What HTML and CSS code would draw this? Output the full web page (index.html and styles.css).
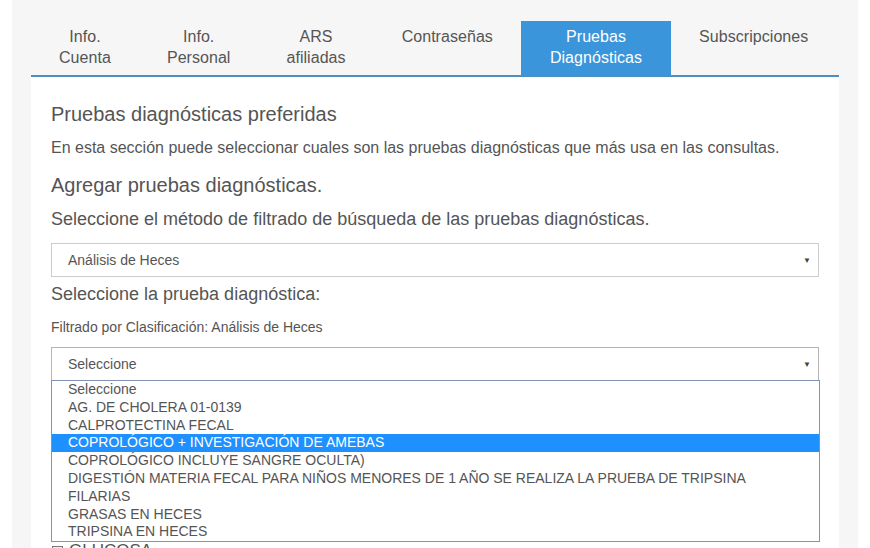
FILE: index.html
```html
<!DOCTYPE html>
<html lang="es">

<head>
    <meta charset="UTF-8">
    <meta name="viewport" content="width=device-width, initial-scale=1.0">
    <title>Pruebas Diagnósticas</title>
    <link rel="stylesheet" href="styles.css">
</head>
<body>
    <div class="panel">
        <ul class="tabs">
            <li class="tab">Info.<br>Cuenta</li>
            <li class="tab">Info.<br>Personal</li>
            <li class="tab">ARS<br>afiliadas</li>
            <li class="tab">Contraseñas</li>
            <li class="tab active">Pruebas<br>Diagnósticas</li>
            <li class="tab">Subscripciones</li>
        </ul>

        <div class="tab-content">
            <h3 class="title">Pruebas diagnósticas preferidas</h3>
            <p class="intro">En esta sección puede seleccionar cuales son las pruebas diagnósticas que más usa en las consultas.</p>
            <h3 class="title title-add">Agregar pruebas diagnósticas.</h3>

            <label class="label">Seleccione el método de filtrado de búsqueda de las pruebas diagnósticas.</label>
            <div class="select select-method">
                <span>Análisis de Heces</span>
                <span class="arrow">▼</span>
            </div>

            <label class="label label-test">Seleccione la prueba diagnóstica:</label>
            <p class="filter-note">Filtrado por Clasificación: Análisis de Heces</p>

            <div class="select-wrap">
                <div class="select select-test">
                    <span>Seleccione</span>
                    <span class="arrow">▼</span>
                </div>
                <!-- lista desplegada del select -->
                <ul class="options">
                    <li>Seleccione</li>
                    <li>AG. DE CHOLERA 01-0139</li>
                    <li>CALPROTECTINA FECAL</li>
                    <li class="selected">COPROLÓGICO + INVESTIGACIÓN DE AMEBAS</li>
                    <li>COPROLÓGICO INCLUYE SANGRE OCULTA)</li>
                    <li>DIGESTIÓN MATERIA FECAL PARA NIÑOS MENORES DE 1 AÑO SE REALIZA LA PRUEBA DE TRIPSINA</li>
                    <li>FILARIAS</li>
                    <li>GRASAS EN HECES</li>
                    <li>TRIPSINA EN HECES</li>
                </ul>
            </div>

            <ul class="preferred">
                <li><span class="check"></span>GLUCOSA</li>
            </ul>
        </div>
    </div>
</body>

</html>
```

FILE: styles.css
```css
body {
    margin: 0;
    font-family: "Liberation Sans", Arial, sans-serif;
    color: #555;
    background-color: #fff;
    overflow: hidden;
}

.panel {
    box-sizing: border-box;
    margin-left: 12px;
    width: 846px;
    height: 548px;
    padding: 21px 19px 0 19px;
    background-color: #f6f6f6;
    overflow: hidden;
}

.tabs {
    display: flex;
    margin: 0;
    padding: 0;
    list-style: none;
    border-bottom: 2px solid #4d8fc0;
}

.tab {
    padding: 5px 28px 6px 28px;
    height: 43px;
    font-size: 16px;
    line-height: 21px;
    letter-spacing: 0.05px;
    text-align: center;
    color: #555;
}

.tab.active {
    padding: 5px 29px 6px 29px;
    background-color: #3a95db;
    color: #fff;
}

.tab-content {
    background-color: #fff;
    padding: 25px 20px 0 20px;
    height: 500px;
}

.title {
    margin: 0;
    font-size: 20px;
    font-weight: normal;
    line-height: 24px;
}

.intro {
    margin: 12px 0 0 0;
    font-size: 16px;
    line-height: 20px;
}

.title-add {
    margin-top: 15px;
}

.label {
    display: block;
    margin-top: 11px;
    font-size: 18px;
    line-height: 22px;
}

.label-test {
    margin-top: 6px;
}

.select {
    display: flex;
    justify-content: space-between;
    align-items: center;
    height: 32px;
    margin-top: 13px;
    padding: 0 7px 0 16px;
    border: 1px solid #ccc;
    font-size: 14px;
    color: #555;
    background-color: #fff;
}

.arrow {
    font-size: 8px;
    color: #444;
}

.filter-note {
    margin: 14px 0 0 0;
    font-size: 14px;
    line-height: 16px;
}

.select-wrap {
    position: relative;
    margin-top: 12px;
}

.select-test {
    margin-top: 0;
    border-color: #b5b5b5;
}

.options {
    position: absolute;
    top: 33px;
    left: 0;
    right: -1px;
    z-index: 2;
    margin: 0;
    padding: 0;
    list-style: none;
    border: 1px solid #7f93b5;
    background-color: #fff;
}

.options li {
    height: 17.8px;
    padding-left: 16px;
    font-size: 14px;
    line-height: 17.8px;
    color: #555;
    white-space: nowrap;
}

.options li.selected {
    background-color: #1e90ff;
    color: #fff;
}

.preferred {
    margin: 160px 0 0 0;
    padding: 0;
    list-style: none;
}

.preferred li {
    display: flex;
    align-items: center;
    height: 20px;
    font-size: 17px;
    color: #555;
}

.check {
    width: 9px;
    height: 9px;
    margin: 0 6px 0 1px;
    border: 1px solid #777;
    background-color: #eee;
}
```
